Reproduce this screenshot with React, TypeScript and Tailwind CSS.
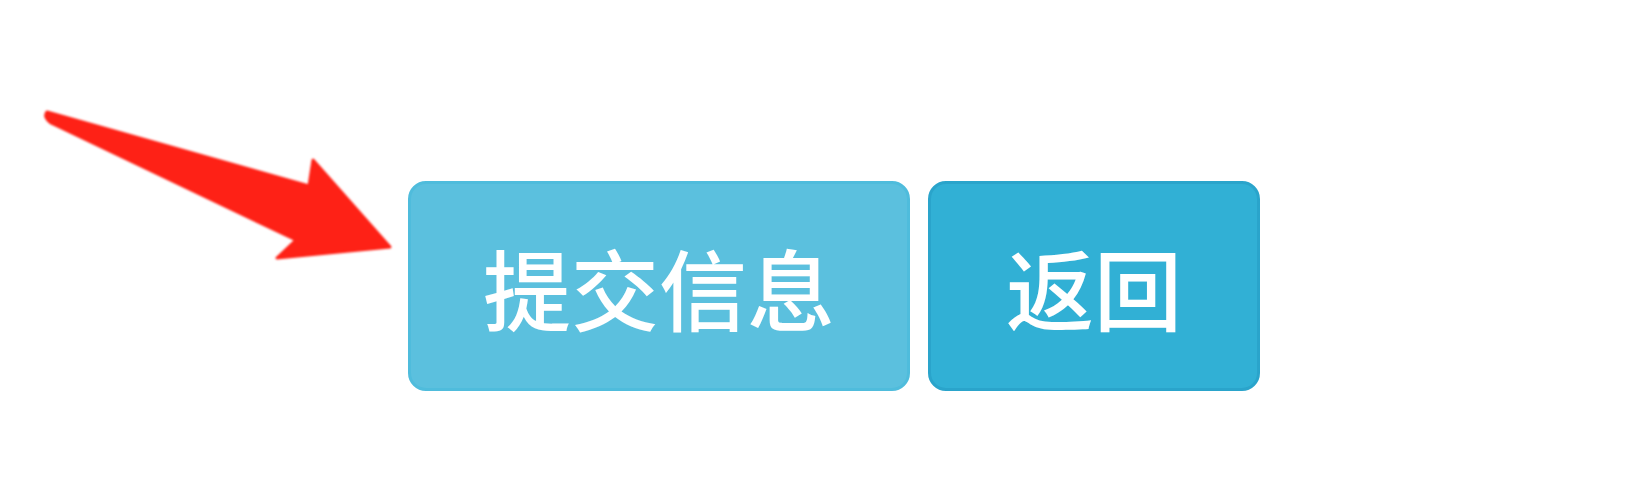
import React from "react";

export default function App() {
  return (
    <div className="relative w-[1637px] h-[488px] bg-white overflow-hidden font-['Noto_Sans_CJK_SC','Noto_Sans',sans-serif]">
      <svg
        className="absolute left-0 top-0"
        width="420"
        height="300"
        viewBox="0 0 420 300"
      >
        <path
          className="blur-[1px]"
          d="M47 112 Q43 117 51 123 L296 240 L277 258 L390 247 L313 160 L309 186 Z"
          fill="#fe2116"
          stroke="#fe2116"
          strokeWidth="3"
          strokeLinejoin="round"
        />
      </svg>
      <div className="flex gap-[18px] pl-[408px] pt-[181px]">
        <button className="w-[502px] h-[210px] rounded-[18px] border-[3px] border-[#4fbcdc] bg-[#5bc0de] text-white text-[88px] font-medium leading-none flex items-center justify-center">
          提交信息
        </button>
        <button className="w-[332px] h-[210px] rounded-[18px] border-[3px] border-[#2aa4cb] bg-[#31b0d5] text-white text-[88px] font-medium leading-none flex items-center justify-center">
          返回
        </button>
      </div>
    </div>
  );
}
